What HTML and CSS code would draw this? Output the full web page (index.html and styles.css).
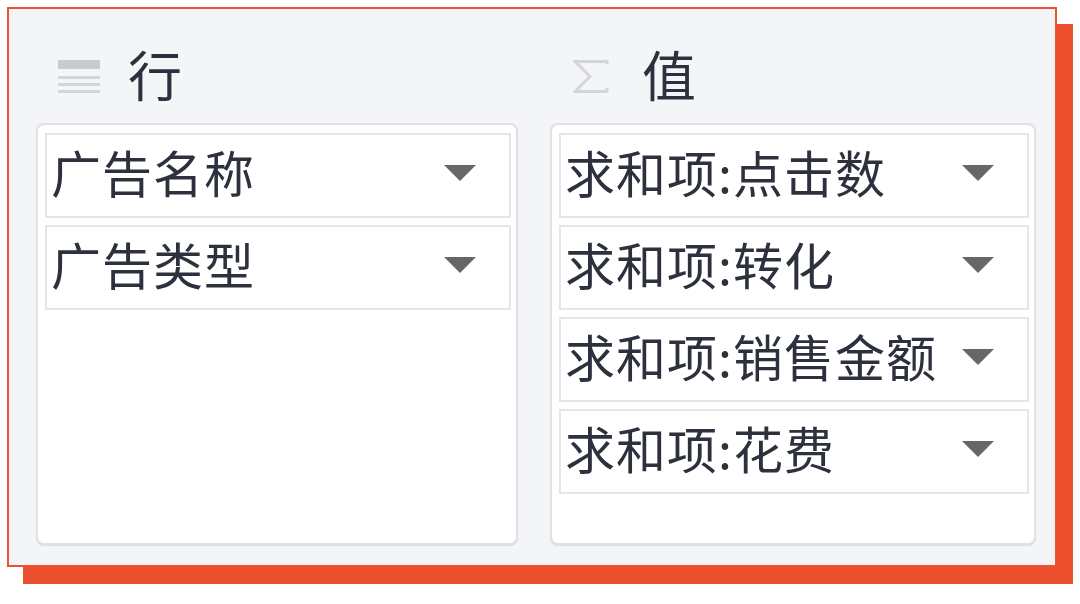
FILE: index.html
```html
<!DOCTYPE html>
<html lang="zh-CN">
<head>
    <meta charset="UTF-8">
    <title>数据透视表字段</title>
    <link rel="stylesheet" href="styles.css">
</head>
<body>
    <div class="pivot-card">
        <div class="area">
            <div class="area-head">
                <span class="area-icon">
                    <svg width="42" height="33" viewBox="0 0 42 33">
                        <rect x="0" y="0" width="42" height="9" fill="#c9cbcf"/>
                        <rect x="0" y="16" width="42" height="3" fill="#d3d5d8"/>
                        <rect x="0" y="23" width="42" height="3" fill="#d3d5d8"/>
                        <rect x="0" y="30" width="42" height="3" fill="#d3d5d8"/>
                    </svg>
                </span>
                <span class="area-title">行</span>
            </div>
            <div class="area-list">
                <div class="field"><span>广告名称</span><i class="caret"></i></div>
                <div class="field"><span>广告类型</span><i class="caret"></i></div>
            </div>
        </div>
        <div class="area">
            <div class="area-head">
                <span class="area-icon sigma">
                    <svg width="36" height="33" viewBox="0 0 36 33">
                        <path d="M34 4 V1.5 H2 L17 16.5 L2 31.5 H34 V28" fill="none" stroke="#d4d5d8" stroke-width="3"/>
                    </svg>
                </span>
                <span class="area-title">值</span>
            </div>
            <div class="area-list">
                <div class="field"><span>求和项:点击数</span><i class="caret"></i></div>
                <div class="field"><span>求和项:转化</span><i class="caret"></i></div>
                <div class="field"><span>求和项:销售金额</span><i class="caret"></i></div>
                <div class="field"><span>求和项:花费</span><i class="caret"></i></div>
            </div>
        </div>
    </div>
</body>
</html>
```

FILE: styles.css
```css
* { box-sizing: border-box; }
html, body { height: 100%; }
body { margin: 0; background: #fff; font-family: "Noto Sans CJK SC", "Noto Sans", sans-serif; color: #2c313d; }

.pivot-card {
    margin: 7px 0 0 7px;
    width: 1050px;
    height: 560px;
    border: 2px solid #ef5131;
    background: #f4f5f7;
    box-shadow: 16px 17px 0 #ec4f2e;
    display: grid;
    grid-template-columns: 482px 486px;
    column-gap: 32px;
    padding-left: 27px;
}

.area { display: flex; flex-direction: column; }
.area-head { height: 114px; padding-top: 40px; display: flex; align-items: flex-start; }
.area-icon { width: 70px; margin-left: 22px; height: 54px; display: flex; align-items: center; }
.area-icon.sigma { margin-left: 23px; width: 69px; }
.area-icon svg { display: block; }
.area-title { font-size: 54px; line-height: 54px; margin-top: -2px; }

.area-list {
    height: 422px;
    background: #fff;
    border: 2px solid #dfe1e6;
    border-radius: 8px;
    box-shadow: 0 1px 1px #d8dbe0;
    padding: 8px 5px 0 7px;
    display: flex;
    flex-direction: column;
    gap: 7px;
}

.field {
    height: 85px;
    border: 2px solid #e4e6ea;
    display: flex;
    align-items: center;
    justify-content: space-between;
    padding: 0 33px 0 4px;
    font-size: 50px;
    line-height: 1;
    letter-spacing: 1px;
    white-space: nowrap;
}
.field span { padding-bottom: 9px; }
.caret {
    width: 0;
    height: 0;
    border-left: 16px solid transparent;
    border-right: 16px solid transparent;
    border-top: 16px solid #676767;
    margin-top: -5px;
}
```
